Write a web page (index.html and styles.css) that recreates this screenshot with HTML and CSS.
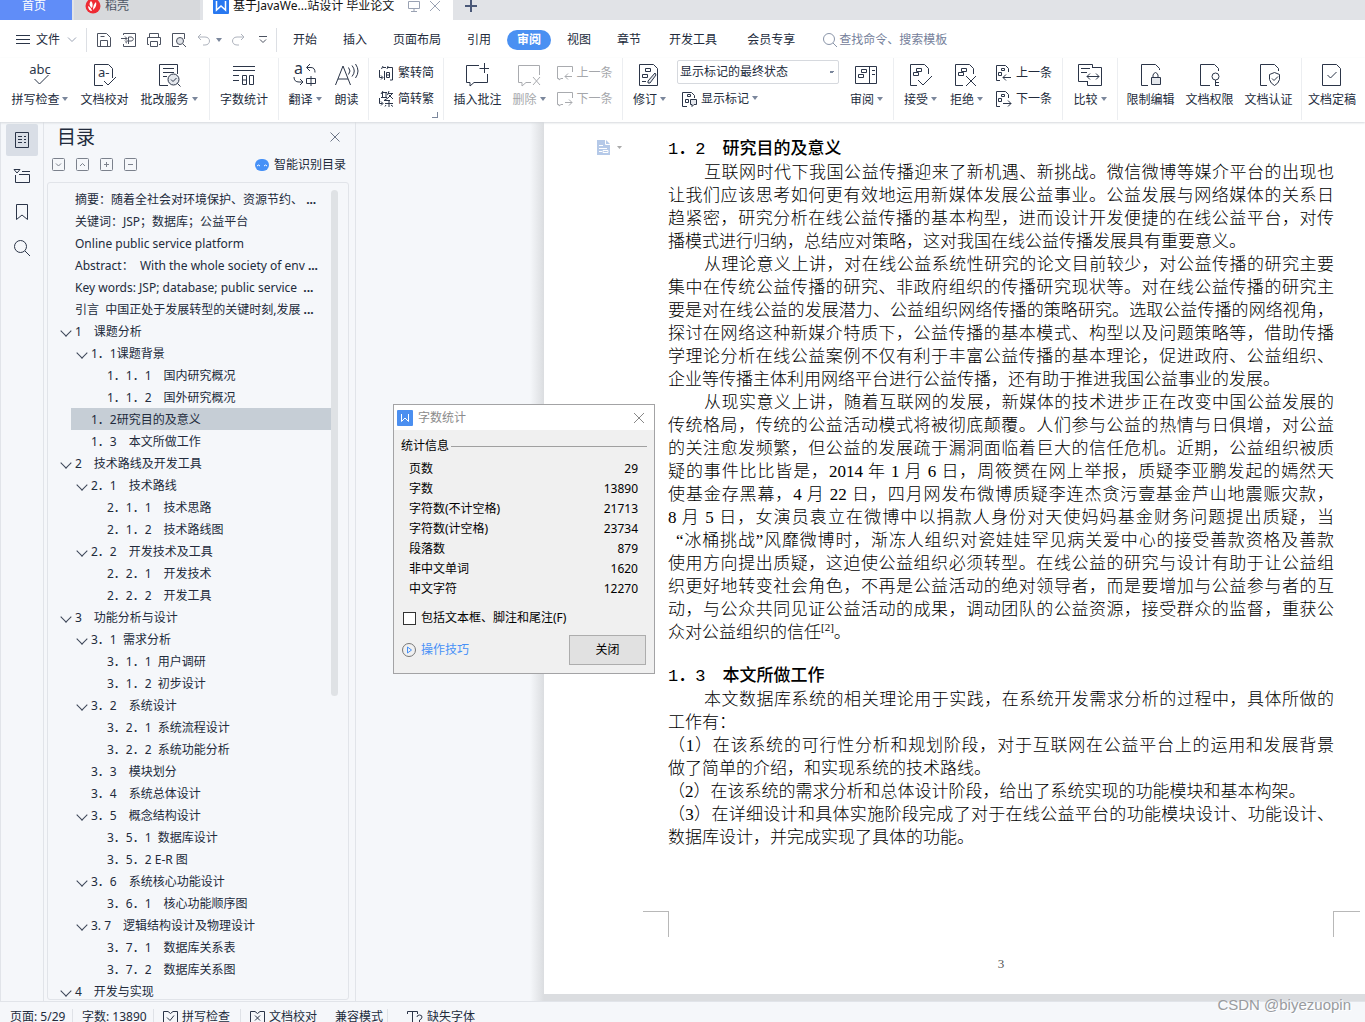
FILE: index.html
```html
<!DOCTYPE html>
<html lang="zh-CN">
<head>
<meta charset="utf-8">
<title>基于JavaWeb网站设计 毕业论文</title>
<link rel="stylesheet" href="styles.css">
</head>
<body>
<header class="tabbar">
  <button class="tab home">首页</button>
  <button class="tab shell"><svg class="fill" width="16" height="16" viewBox="0 0 16 16"><circle cx="8" cy="8" r="7.500" fill="#ee2b34"/><path d="M6 3c2 2 2 4 1 7C4 8 4 5 6 3zM11 4c1 4-1 6-3 8 0-4 1-6 3-8zM3 8c2 1 3 2 4 5-2 0-4-2-4-5z" fill="#fff"/></svg>稻壳</button>
  <button class="tab doc"><svg width="16" height="16" viewBox="0 0 16 16"><rect width="16" height="16" rx="1" fill="#2878f0"/><path d="M3.500 3v9l4.500-4 4.500 4V3" stroke="#fff" stroke-width="1.500"/></svg><span>基于JavaWe...站设计 毕业论文</span><svg class="pale" width="12" height="14" viewBox="0 0 12 14"><path d="M.5 2.500h11v7H.5zM6 9.500v3M3 12.500h6"/></svg><svg class="pale" width="12" height="14" viewBox="0 0 12 14"><path d="M1 2l10 10M11 2L1 12"/></svg></button>
  <button class="tab add" aria-label="新建"><svg width="12" height="12" viewBox="0 0 12 12"><path d="M6 0v12M0 6h12" stroke="#4a5878" stroke-width="2"/></svg></button>
</header>

<nav class="menubar">
  <button class="file"><svg width="14" height="12" viewBox="0 0 14 12"><path d="M0 1.500h14M0 5.500h14M0 9.500h14"/></svg>文件<svg class="pale" width="10" height="6" viewBox="0 0 10 6"><path d="M1 .5l4 4 4-4"/></svg></button>
  <div class="quick">
    <button aria-label="保存"><svg width="16" height="16" viewBox="0 0 16 16"><path d="M1.500 1.500h9l4 4v9h-13zM4.500 14.500v-6h7v6M4.500 4.500h4"/></svg></button>
    <button aria-label="输出为PDF"><svg width="16" height="16" viewBox="0 0 16 16"><path d="M2.500 3V1.500h12v13h-12V12M0 6.500h6M4 4.500l2 2-2 2M7.500 12V5h2.500c3 0 3 4 0 4H5.500c-1 0-1 2 .5 2"/></svg></button>
    <button aria-label="打印"><svg width="16" height="16" viewBox="0 0 16 16"><path d="M3.500 5V1.500h9V5M3 12.500H1.500v-7h13v7H13M4.500 9.500h7v5h-7z"/></svg></button>
    <button aria-label="打印预览"><svg width="16" height="16" viewBox="0 0 16 16"><path d="M8 14.500H1.500v-13h12V7M12 12l3 3"/><circle cx="9" cy="9" r="3.500" fill="#e0e3e8"/></svg></button>
    <button class="undo" aria-label="撤销"><svg class="pale" width="14" height="14" viewBox="0 0 14 14"><path d="M4 1L1 4l3 3M1 4h7c6 0 6 8 0 8H6"/></svg><i class="caret"></i></button>
    <button aria-label="恢复"><svg class="pale" width="14" height="14" viewBox="0 0 14 14"><path d="M10 1l3 3-3 3M13 4H6c-6 0-6 8 0 8h2"/></svg></button>
    <button aria-label="自定义"><svg width="8" height="8" viewBox="0 0 8 8"><path d="M0 .5h8M1 3.500l3 3 3-3"/></svg></button>
  </div>
  <div class="menus">
    <button>开始</button><button>插入</button><button>页面布局</button><button>引用</button><button class="active">审阅</button><button>视图</button><button>章节</button><button class="wide">开发工具</button><button class="wide">会员专享</button>
  </div>
  <label class="search"><svg width="15" height="15" viewBox="0 0 15 15"><circle cx="6" cy="6" r="5.500"/><path d="M10 10l4 4"/></svg><input type="text" placeholder="查找命令、搜索模板" aria-label="查找命令"></label>
</nav>

<section class="ribbon">
  <div class="group">
    <button class="tool"><svg viewBox="0 0 24 24"><text x="12" y="11" text-anchor="middle" class="glyph">abc</text><path d="M6.500 16l5 5 9-9"/></svg><span>拼写检查<i class="caret"></i></span></button>
    <button class="tool"><svg viewBox="0 0 24 24"><path d="M11 22.500H2.500v-21h14l4 4V15M12 18l4 4 8-8"/><text x="6" y="14" class="glyph">a-</text></svg><span>文档校对</span></button>
    <button class="tool"><svg viewBox="0 0 24 24"><path d="M11 22.500H2.500v-21h18V11M6 5.500h11M6 9.500h11M6 13.500h4M20 20l3.500 3.500"/><circle cx="16.500" cy="16.500" r="5.500" fill="#e4e7ec"/><path d="M14 16.500l2 2 3.500-3.500"/></svg><span>批改服务<i class="caret"></i></span></button>
  </div>
  <div class="group">
    <button class="tool"><svg viewBox="0 0 24 24"><path d="M1 3.500h22M1 7.500h22M1 12.500h6M1 17.500h6M10.500 12.500h4v9h-4zM10.500 17h4M17.500 12.500h4v9h-4z"/></svg><span>字数统计</span></button>
  </div>
  <div class="group roomy">
    <button class="tool"><svg viewBox="0 0 24 24"><text x="1" y="11" class="glyph big">a</text><path d="M17 1l-3.500 3.500L17 8M14 4.500h4q4 0 4 5M1 14q0 5 5 5h4M7 16l3 3-3 3M13.500 15.500h9v5h-9zM18 13v10"/></svg><span>翻译<i class="caret"></i></span></button>
    <button class="tool"><svg viewBox="0 0 24 24"><path d="M.5 22L8 3l7.500 19M3 16h10M13.500 4.500q3 3.500 0 7M17 2.500q4.500 5.500 0 11M20.500 1q5 7 0 14"/></svg><span>朗读</span></button>
  </div>
  <div class="group corner">
    <div class="stack">
      <button><svg width="16" height="16" viewBox="0 0 16 16"><path d="M5 1L3.500 4M5 2.500h3M10 1L9 4M10 2.500h4.500V15H12M6.500 6v9M8.500 7.500h3v5h-3zM8.500 10h3M1.500 5v7.500h3M3 10.500l2 2-2 2"/></svg>繁转简</button>
      <button><svg width="16" height="16" viewBox="0 0 16 16"><path d="M5 0L3 3M4 1.500h5M3 6.500h6M4.500 2v4M8 2v4.500M11 0L9.500 4M10 2.500h5M14 3l-4 4M11 4l4 4M10 7l-4 2.500h6M7 12.500h8M11 10v6M8 14l-1 1.500M13 14l2 1.500M1.500 7v5.500h3M3 10.500l2 2-2 2"/></svg>简转繁</button>
    </div>
  </div>
  <div class="group">
    <button class="tool"><svg viewBox="0 0 24 24"><path d="M14 2.500H1.500v17H5V23l4-3.500h13.500V11M19.500 0v10M14.500 5.500h9.500"/></svg><span>插入批注</span></button>
    <button class="tool off"><svg viewBox="0 0 24 24"><path d="M14 19.500H9L5 23v-3.500H1.500v-17h21V12M16 14l7 8M23 14l-7 8"/></svg><span>删除<i class="caret"></i></span></button>
    <div class="stack off">
      <button><svg width="16" height="16" viewBox="0 0 16 16"><path d="M6 13.500H4L2 15v-1.500H.5v-12h15V7M15 11.500H8M11 8.500l-3 3 3 3"/></svg>上一条</button>
      <button><svg width="16" height="16" viewBox="0 0 16 16"><path d="M6 13.500H4L2 15v-1.500H.5v-12h15V7M8 11.500h7M12 8.500l3 3-3 3"/></svg>下一条</button>
    </div>
  </div>
  <div class="group">
    <button class="tool"><svg viewBox="0 0 24 24"><path d="M2.500 1.500h14l4 4v17h-18zM8.500 5.500h5v3h-5zM5.500 11.500h5v3h-5zM5 18.500h4"/><path d="M18 10l-7 8v2h2l6-8z" fill="#e4e7ec"/></svg><span>修订<i class="caret"></i></span></button>
    <div class="markup">
      <select aria-label="标记状态"><option>显示标记的最终状态</option></select>
      <button><svg width="16" height="16" viewBox="0 0 16 16"><path d="M6 15.500H1.500v-14h9l3 3V7M6.500 3.500h3v2h-3zM4.500 8.500h3v3h-3z"/><path d="M9.500 8.500h6v5H13l-2 2v-2H9.500z" fill="#e4e7ec"/></svg><span>显示标记<i class="caret"></i></span></button>
    </div>
    <button class="tool"><svg viewBox="0 0 24 24"><path d="M.5 3.500h21v17H.5zM14.500 3.500v17M6.500 6.500h5v3h-5zM3.500 11.500h5v3h-5zM17 7.500h3M17 11.500h3"/></svg><span>审阅<i class="caret"></i></span></button>
  </div>
  <div class="group roomy">
    <button class="tool"><svg viewBox="0 0 24 24"><path d="M9 22.500H2.500v-21h14l4 4V11M8.500 5.500h5v3h-5zM5.500 9.500h5v3h-5zM10 17l5 5 9-9"/></svg><span>接受<i class="caret"></i></span></button>
    <button class="tool"><svg viewBox="0 0 24 24"><path d="M9 22.500H1.500v-21h14l4 4V11M7.500 5.500h5v3h-5zM4.500 9.500h5v3h-5zM12 13l10 10M22 13L12 23"/></svg><span>拒绝<i class="caret"></i></span></button>
    <div class="stack">
      <button><svg width="16" height="16" viewBox="0 0 16 16"><path d="M4 15.500H.5V.5h9l3 3V7M5.500 3.500h3v2h-3zM2.500 7.500h3v3h-3zM15 12.500H7M10 9.500l-3 3 3 3"/></svg>上一条</button>
      <button><svg width="16" height="16" viewBox="0 0 16 16"><path d="M4 15.500H.5V.5h9l3 3V7M5.500 3.500h3v2h-3zM2.500 7.500h3v3h-3zM7 12.500h8M12 9.500l3 3-3 3"/></svg>下一条</button>
    </div>
  </div>
  <div class="group">
    <button class="tool"><svg viewBox="0 0 24 24"><path d="M10 18.500H.5v-17h14V5M14.500 4.500h9v18h-14v-4M3 5.500h9M3 9.500h6M9 13.500h12M12 10.500l-3 3 3 3M18 10.500l3 3-3 3"/></svg><span>比较<i class="caret"></i></span></button>
  </div>
  <div class="group">
    <button class="tool"><svg viewBox="0 0 24 24"><path d="M10 22.500H3.500v-21h14l4 4V7M15 14v-2q2.500-5 5 0v2"/><path d="M13.500 14.500h9v7h-9z" fill="#e4e7ec"/></svg><span>限制编辑</span></button>
    <button class="tool"><svg viewBox="0 0 24 24"><path d="M13 22.500H3.500v-21h14l4 4V8M18.500 17v6M18.500 19.500H22M18.500 22.500H22"/><circle cx="18.500" cy="13.500" r="3.500"/></svg><span>文档权限</span></button>
    <button class="tool"><svg viewBox="0 0 24 24"><path d="M10 22.500H3.500v-21h14l4 4V8M17.500 9.500l5 2v5q-1 4-5 6-4-2-5-6v-5zM15 15.500l2 2 4-4"/></svg><span>文档认证</span></button>
  </div>
  <div class="group final">
    <button class="tool"><svg viewBox="0 0 24 24"><path d="M2.500 1.500h14l4 4v17h-18zM7.500 12l3 3 6-6"/></svg><span>文档定稿</span></button>
  </div>
</section>

<main class="work">
  <aside class="rail">
    <button class="on" aria-label="目录"><svg width="16" height="18" viewBox="0 0 16 18"><path d="M1.500 1.500h13v15h-13zM4 5.500h4M10 5.500h2M4 8.500h4M10 8.500h2M4 11.500h4M10 11.500h2"/></svg></button>
    <button aria-label="章节"><svg width="18" height="16" viewBox="0 0 18 16"><path d="M1 1.500h6L4 5zM9 3.500h8M2.500 7v7.500h14v-8H6"/></svg></button>
    <button aria-label="书签"><svg width="12" height="17" viewBox="0 0 12 17"><path d="M.5.5h11v15L6 11 .5 15.500z"/></svg></button>
    <button aria-label="查找"><svg width="18" height="18" viewBox="0 0 18 18"><circle cx="7.500" cy="7.500" r="6"/><path d="M12 12l5 5"/></svg></button>
  </aside>

  <aside class="outline">
    <div class="heading"><h2>目录</h2><button aria-label="关闭目录"><svg width="10" height="10" viewBox="0 0 10 10"><path d="M.5.5l9 9M9.500.5l-9 9"/></svg></button></div>
    <div class="options">
      <button aria-label="展开"><svg width="14" height="14" viewBox="0 0 14 14"><rect x=".5" y=".5" width="12" height="12" rx="1"/><path d="M4 5.500l2.500 2.500L9 5.500"/></svg></button>
      <button aria-label="收起"><svg width="14" height="14" viewBox="0 0 14 14"><rect x=".5" y=".5" width="12" height="12" rx="1"/><path d="M4 8l2.500-2.500L9 8"/></svg></button>
      <button aria-label="增加"><svg width="14" height="14" viewBox="0 0 14 14"><rect x=".5" y=".5" width="12" height="12" rx="1"/><path d="M6.500 4v5M4 6.500h5"/></svg></button>
      <button aria-label="减少"><svg width="14" height="14" viewBox="0 0 14 14"><rect x=".5" y=".5" width="12" height="12" rx="1"/><path d="M4 6.500h5"/></svg></button>
      <button class="smart"><svg width="14" height="12" viewBox="0 0 14 12"><rect width="14" height="12" rx="6" fill="#4791f7" stroke="none"/><path d="M2 7q1.500-2 3 0M9 7q1.500-2 3 0" stroke="#fff"/></svg>智能识别目录</button>
    </div>
    <div class="tree">
      <ul>
        <li><a href="#">摘要：随着全社会对环境保护、资源节约、 <b>...</b></a></li>
        <li><a href="#">关键词：JSP；数据库；公益平台</a></li>
        <li><a href="#">Online public service platform</a></li>
        <li><a href="#">Abstract：&nbsp; With the whole society of env <b>...</b></a></li>
        <li><a href="#">Key words: JSP; database; public service&nbsp; <b>...</b></a></li>
        <li><a href="#">引言&nbsp; 中国正处于发展转型的关键时刻,发展 <b>...</b></a></li>
        <li class="open"><a href="#">1　课题分析</a></li>
        <li class="l1 open"><a href="#">1．1课题背景</a></li>
        <li class="l2"><a href="#">1．1．1　国内研究概况</a></li>
        <li class="l2"><a href="#">1．1．2　国外研究概况</a></li>
        <li class="l1 current"><a href="#">1．2研究目的及意义</a></li>
        <li class="l1"><a href="#">1．3　本文所做工作</a></li>
        <li class="open"><a href="#">2　技术路线及开发工具</a></li>
        <li class="l1 open"><a href="#">2．1　技术路线</a></li>
        <li class="l2"><a href="#">2．1．1　技术思路</a></li>
        <li class="l2"><a href="#">2．1．2　技术路线图</a></li>
        <li class="l1 open"><a href="#">2．2　开发技术及工具</a></li>
        <li class="l2"><a href="#">2．2．1　开发技术</a></li>
        <li class="l2"><a href="#">2．2．2　开发工具</a></li>
        <li class="open"><a href="#">3　功能分析与设计</a></li>
        <li class="l1 open"><a href="#">3．1&nbsp; 需求分析</a></li>
        <li class="l2"><a href="#">3．1．1&nbsp; 用户调研</a></li>
        <li class="l2"><a href="#">3．1．2&nbsp; 初步设计</a></li>
        <li class="l1 open"><a href="#">3．2　系统设计</a></li>
        <li class="l2"><a href="#">3．2．1&nbsp; 系统流程设计</a></li>
        <li class="l2"><a href="#">3．2．2&nbsp; 系统功能分析</a></li>
        <li class="l1"><a href="#">3．3　模块划分</a></li>
        <li class="l1"><a href="#">3．4　系统总体设计</a></li>
        <li class="l1 open"><a href="#">3．5　概念结构设计</a></li>
        <li class="l2"><a href="#">3．5．1&nbsp; 数据库设计</a></li>
        <li class="l2"><a href="#">3．5．2 E-R 图</a></li>
        <li class="l1 open"><a href="#">3．6　系统核心功能设计</a></li>
        <li class="l2"><a href="#">3．6．1　核心功能顺序图</a></li>
        <li class="l1 open"><a href="#">3. 7　逻辑结构设计及物理设计</a></li>
        <li class="l2"><a href="#">3．7．1　数据库关系表</a></li>
        <li class="l2"><a href="#">3．7．2　数据库关系图</a></li>
        <li class="open"><a href="#">4　开发与实现</a></li>
      </ul>
      <div class="scroll"></div>
    </div>
  </aside>

  <section class="desk">
    <article class="page">
      <div class="gutter"><svg width="26" height="16" viewBox="0 0 26 16"><path d="M0 0h9l4 4v11H0z" fill="#b5c9e8" stroke="none"/><path d="M8.500 0v4.500H13M2 5.500h4M2 8.500h8M2 11.500h3M6 10.500h5v2H6z" stroke="#fff"/><path d="M20 6h5l-2.500 3z" fill="#aaa" stroke="none"/></svg></div>
      <div class="text">
        <h3>1．2　研究目的及意义</h3>
        <p><span class="first">互联网时代下我国公益传播迎来了新机遇、新挑战。微信微博等媒介平台的出现也</span><span>让我们应该思考如何更有效地运用新媒体发展公益事业。公益发展与网络媒体的关系日</span><span>趋紧密，研究分析在线公益传播的基本构型，进而设计开发便捷的在线公益平台，对传</span><span class="last">播模式进行归纳，总结应对策略，这对我国在线公益传播发展具有重要意义。</span></p>
        <p><span class="first">从理论意义上讲，对在线公益系统性研究的论文目前较少，对公益传播的研究主要</span><span>集中在传统公益传播的研究、非政府组织的传播研究现状等。对在线公益传播的研究主</span><span>要是对在线公益的发展潜力、公益组织网络传播的策略研究。选取公益传播的网络视角，</span><span>探讨在网络这种新媒介特质下，公益传播的基本模式、构型以及问题策略等，借助传播</span><span>学理论分析在线公益案例不仅有利于丰富公益传播的基本理论，促进政府、公益组织、</span><span class="last">企业等传播主体利用网络平台进行公益传播，还有助于推进我国公益事业的发展。</span></p>
        <p><span class="first">从现实意义上讲，随着互联网的发展，新媒体的技术进步正在改变中国公益发展的</span><span>传统格局，传统的公益活动模式将被彻底颠覆。人们参与公益的热情与日俱增，对公益</span><span>的关注愈发频繁，但公益的发展疏于漏洞面临着巨大的信任危机。近期，公益组织被质</span><span>疑的事件比比皆是，2014 年 1 月 6 日，周筱赟在网上举报，质疑李亚鹏发起的嫣然天</span><span>使基金存黑幕，4 月 22 日，四月网发布微博质疑李连杰贪污壹基金芦山地震赈灾款，</span><span>8 月 5 日，女演员袁立在微博中以捐款人身份对天使妈妈基金财务问题提出质疑，当</span><span class="quoted">“冰桶挑战”风靡微博时，渐冻人组织对瓷娃娃罕见病关爱中心的接受善款资格及善款</span><span>使用方向提出质疑，这迫使公益组织必须转型。在线公益的研究与设计有助于让公益组</span><span>织更好地转变社会角色，不再是公益活动的绝对领导者，而是要增加与公益参与者的互</span><span>动，与公众共同见证公益活动的成果，调动团队的公益资源，接受群众的监督，重获公</span><span class="last">众对公益组织的信任<sup>[2]</sup>。</span></p>
        <h3 class="next">1．3　本文所做工作</h3>
        <p><span class="first">本文数据库系统的相关理论用于实践，在系统开发需求分析的过程中，具体所做的</span><span class="last">工作有：</span></p>
        <p><span>（1）在该系统的可行性分析和规划阶段，对于互联网在公益平台上的运用和发展背景</span><span class="last">做了简单的介绍，和实现系统的技术路线。</span></p>
        <p><span class="last">（2）在该系统的需求分析和总体设计阶段，给出了系统实现的功能模块和基本构架。</span></p>
        <p><span>（3）在详细设计和具体实施阶段完成了对于在线公益平台的功能模块设计、功能设计、</span><span class="last">数据库设计，并完成实现了具体的功能。</span></p>
      </div>
      <footer><i class="crop left"></i><span>3</span><i class="crop right"></i></footer>
    </article>
  </section>
</main>

<footer class="status">
  <span class="cell pages">页面: 5/29</span>
  <span class="cell words">字数: 13890</span>
  <button class="cell"><svg width="15" height="15" viewBox="0 0 15 15"><path d="M5 1.500H.5v12h14v-12H10M5 1.500l2.500 2 2.500-2M4 7.500l3 3 4-5"/></svg>拼写检查</button>
  <button class="cell proof"><svg width="15" height="15" viewBox="0 0 15 15"><path d="M5 1.500H.5v12h14v-12H10M5 1.500l2.500 2 2.500-2M5 5.500l5 5M10 5.500l-5 5"/></svg>文档校对</button>
  <span class="cell plain">兼容模式</span>
  <button class="cell missing"><svg width="16" height="15" viewBox="0 0 16 15"><path d="M.5 4V1.500h10V4M5.500 1.500v12M3 13.500h5M10 7q0-2 2.500-2T15 7q0 2-2.500 3v2M12.500 13v2"/></svg>缺失字体</button>
</footer>

<div class="dialog" role="dialog" aria-label="字数统计">
  <div class="title"><svg width="16" height="16" viewBox="0 0 16 16"><rect width="16" height="16" rx="1" fill="#4b8ff0" stroke="none"/><path d="M4.500 4v7.500L8 8l3.500 3.500V4" stroke="#fff"/></svg><span>字数统计</span><button aria-label="关闭窗口"><svg width="12" height="12" viewBox="0 0 12 12"><path d="M1 1l10 10M11 1L1 11"/></svg></button></div>
  <div class="legend">统计信息</div>
  <table>
    <tr><th>页数</th><td>29</td></tr>
    <tr><th>字数</th><td>13890</td></tr>
    <tr><th>字符数(不计空格)</th><td>21713</td></tr>
    <tr><th>字符数(计空格)</th><td>23734</td></tr>
    <tr><th>段落数</th><td>879</td></tr>
    <tr><th>非中文单词</th><td>1620</td></tr>
    <tr><th>中文字符</th><td>12270</td></tr>
  </table>
  <label class="include"><input type="checkbox">包括文本框、脚注和尾注(F)</label>
  <div class="actions"><a href="#"><svg width="14" height="14" viewBox="0 0 14 14"><circle cx="7" cy="7" r="6.500" stroke="#777"/><path d="M5.500 4v6l4-3z"/></svg>操作技巧</a><button>关闭</button></div>
</div>
<div class="watermark">CSDN @biyezuopin</div>
</body>
</html>
```
FILE: styles.css
```css
* { box-sizing: border-box; }
body {
  margin: 0;
  height: 100vh;
  display: flex;
  flex-direction: column;
  overflow: hidden;
  position: relative;
  background: #f5f7fa;
  color: #222b3c;
  font: 12px/16px "Noto Sans", "Noto Sans CJK SC", sans-serif;
}
button, input, select {
  font: inherit;
  color: inherit;
  background: none;
  border: 0;
  padding: 0;
  margin: 0;
  white-space: nowrap;
}
svg { fill: none; stroke: #2b3548; flex: none; display: block; }
.pale { stroke: #9aa2b3; }
.fill { stroke: none; }
a { color: inherit; text-decoration: none; }
.caret {
  display: inline-block;
  border: 3px solid transparent;
  border-top: 4px solid #7b879c;
  border-bottom: 0;
  margin-left: 3px;
  vertical-align: 3px;
}

/* document tabs */
.tabbar { height: 20px; flex: none; display: flex; align-items: flex-end; overflow: hidden; background: #e1e3e7; }
.tab { height: 28px; display: flex; align-items: center; gap: 4px; }
.home { width: 72px; justify-content: center; background: #608df8; color: #fff; padding-right: 4px; }
.shell { width: 126px; margin: 0 3px 0 2px; padding-left: 11px; background: #d7d9dc; color: #4e5665; }
.doc { width: 250px; padding-left: 10px; background: #fff; color: #111; }
.doc span { margin-right: 10px; }
.doc .pale + .pale { margin-left: 5px; }
.doc svg:first-child { stroke: none; }
.add { padding-left: 12px; }

/* menu row */
.menubar { height: 38px; flex: none; display: flex; align-items: center; padding-top: 2px; background: #fff; }
.file { display: flex; align-items: center; gap: 7px; width: 87px; height: 24px; padding-left: 16px; border-right: 1px solid #dcdfe4; }
.file svg:first-child { margin-right: -1px; }
.quick { display: flex; align-items: center; gap: 9px; width: 190px; height: 24px; padding-left: 9px; border-right: 1px solid #dcdfe4; }
.quick svg { stroke: #4c5260; }
.quick .pale { stroke: #aeb3bd; }
.undo { display: flex; align-items: center; gap: 2px; margin-left: 1px; }
.quick button:last-child { margin-left: 5px; }
.menus { display: flex; align-items: center; padding-left: 3px; }
.menus button { padding: 0 13px; height: 20px; }
.menus .wide { padding: 0 15px; }
.menus .active { padding: 0 10px; margin: 0 3px; border-radius: 10px; background: #4a90f2; color: #fff; font-weight: 700; }
.search { flex: 1; display: flex; align-items: center; gap: 1px; padding-left: 13px; color: #75809a; }
.search svg { stroke: #8994a8; }
.search input { flex: 1; min-width: 0; }
.search input::placeholder { color: #75809a; opacity: 1; }

/* ribbon */
.ribbon {
  height: 64px;
  flex: none;
  display: grid;
  grid-template-columns: 210px 69px 90px 75px 179px 271px 169px 55px 184px 1fr;
  background: #fff;
  box-shadow: 0 1px 2px #d5d8dc;
  position: relative;
}
.group { display: flex; justify-content: center; gap: 11px; height: 62px; padding-top: 5px; border-right: 1px solid #eceef1; }
.group:first-child { gap: 12px; }
.group:last-child { border: 0; }
.final { padding-right: 3px; }
.roomy { gap: 13px; }
.corner { position: relative; }
.corner::after { content: ""; position: absolute; right: 5px; bottom: 2px; width: 5px; height: 5px; border: solid #7b879c; border-width: 0 1px 1px 0; }
.tool { display: flex; flex-direction: column; align-items: center; gap: 5px; height: 45px; }
.tool svg { width: 24px; height: 24px; }
.glyph { font: 13px "Noto Sans", sans-serif; fill: #2b3548; stroke: none; }
.big { font-size: 16px; }
.off { color: #a5a7ab; }
.off svg { stroke: #a9abaf; }
.stack { display: flex; flex-direction: column; gap: 10px; padding-top: 2px; }
.stack button { display: flex; align-items: center; gap: 4px; }
.markup { width: 162px; display: flex; flex-direction: column; align-items: flex-start; gap: 7px; margin-top: -3px; }
.markup select {
  width: 100%;
  height: 24px;
  padding-left: 2px;
  border: 1px solid #d6d9de;
  border-radius: 2px;
  appearance: none;
  background: conic-gradient(from 315deg at 3px 3px, #7b879c 90deg, transparent 0) right 3px center / 6px 3px no-repeat;
}
.markup button { display: flex; gap: 4px; padding-left: 4px; }

/* work area */
.work { flex: 1; min-height: 0; display: flex; border-bottom: 1px solid #e1e4e9; }
.rail { width: 44px; flex: none; display: flex; flex-direction: column; gap: 4px; padding: 2px 5px 0; border: solid #e1e4e9; border-width: 0 1px; }
.rail button { height: 32px; display: grid; place-items: center; border-radius: 2px; }
.rail .on { background: #d9dee6; }
.outline { width: 312px; flex: none; display: flex; flex-direction: column; padding: 2px 6px 1px 3px; border-right: 1px solid #e1e4e9; }
.heading { display: flex; align-items: center; justify-content: space-between; height: 26px; padding: 0 9px 0 10px; }
.heading h2 { margin: 0; font-size: 19px; line-height: 26px; font-weight: 400; }
.heading svg { stroke: #6d7687; }
.options { display: flex; align-items: center; gap: 10px; height: 29px; padding: 0 3px 0 5px; }
.options svg { stroke: #7b818c; }
.smart { display: flex; align-items: center; gap: 5px; margin-left: auto; }
.tree { flex: 1; min-height: 0; margin-top: 3px; display: flex; overflow: hidden; border: 1px solid #e1e4e9; border-radius: 3px; padding-top: 5px; }
.tree ul { list-style: none; flex: 1; margin: 0; padding: 0 0 0 23px; }
.tree li { height: 22px; line-height: 24px; padding-left: 4px; white-space: nowrap; position: relative; }
.tree .l1 { padding-left: 20px; }
.tree .l2 { padding-left: 36px; }
.tree .current { background: #c6ced6; }
.open::before { content: ""; position: absolute; top: 7px; margin-left: -13px; width: 7px; height: 7px; border: solid #3b4557; border-width: 0 1px 1px 0; transform: rotate(45deg); }
.scroll { width: 7px; height: 506px; margin: 2px 10px 0 0; border-radius: 4px; background: #dfe2e5; }
.desk { flex: 1; min-width: 0; display: flex; padding: 0 0 7px 188px; background: linear-gradient(90deg, #f5f7fa 174px, #dbdde0 188px); }
.page { flex: 1; display: grid; grid-template-columns: 124px 1fr 31px; grid-template-rows: 1fr auto; background: #fff; color: #000; font: 17px/23px "Liberation Serif", "Noto Sans CJK SC", serif; font-weight: 300; }
.gutter { padding: 18px 0 0 53px; }
.text { padding-top: 16px; white-space: nowrap; }
.text h3 { margin: 0; font: 17px/23px "Liberation Mono", "Noto Sans CJK SC", monospace; font-weight: 500; }
.text .next { margin-top: 21px; }
.text p { margin: 0; }
.text p span { display: block; height: 23px; text-align: justify; text-align-last: justify; }
.text .first { padding-left: 36px; }
.text p .last { text-align-last: left; }
.text p .quoted { padding-left: 8px; }
.text sup { font-size: 11px; line-height: 11px; }
.page footer { grid-column: 1 / -1; display: flex; justify-content: space-between; height: 83px; padding: 0 5px 0 99px; }
.page footer span { padding-top: 42px; font: 13px/22px "Liberation Serif", serif; color: #555; }
.crop { width: 26px; height: 26px; border: 0 solid #b8b8b8; border-top-width: 1px; }
.left { border-right-width: 1px; }
.right { width: 27px; border-left-width: 1px; }

/* status bar */
.status { height: 20px; flex: none; display: flex; gap: 4px; padding: 6px 0 0 10px; overflow: hidden; }
.cell { display: flex; align-items: center; gap: 4px; height: 18px; flex: none; }
.cell + .cell::before { content: ""; width: 1px; height: 16px; margin-right: 5px; background: #dfe2e7; }
.pages { width: 58px; }
.words { width: 77px; }
.status .proof { margin-left: 6px; }
.status .plain { margin-left: 4px; }
.status .plain::before { background: none; }
.status .missing::before { margin-right: 15px; }

/* word count window */
.dialog { position: absolute; left: 393px; top: 404px; width: 262px; background: #f0f0f0; border: 1px solid #a3a3a5; color: #000; }
.title { display: flex; align-items: center; gap: 5px; height: 25px; padding: 0 9px 0 3px; background: #fff; color: #8b8b8b; }
.title button { margin-left: auto; }
.title button svg { stroke: #888; }
.legend { display: flex; align-items: center; gap: 2px; height: 22px; margin: 5px 7px 2px; }
.legend::after { content: ""; flex: 1; height: 1px; background: #a0a0a0; }
.dialog table { width: 229px; margin-left: 15px; border-collapse: collapse; }
.dialog th, .dialog td { height: 20px; padding: 0; font-weight: 400; text-align: left; }
.dialog td { text-align: right; }
.include { display: flex; align-items: center; gap: 5px; height: 20px; margin: 9px 0 0 9px; }
.include input { appearance: none; width: 13px; height: 13px; border: 1px solid #333; background: #fff; }
.actions { display: flex; justify-content: space-between; align-items: center; padding: 7px 8px 8px; }
.actions a { display: flex; align-items: center; gap: 5px; color: #4791f7; }
.actions a svg { stroke: #4791f7; }
.actions button { width: 77px; height: 30px; background: #e1e1e1; border: 1px solid #adadad; }
.watermark { position: absolute; right: 14px; bottom: 7px; font: 15px/20px "Liberation Sans", sans-serif; color: #999b9f; text-shadow: 1px 1px #fff; }
```
